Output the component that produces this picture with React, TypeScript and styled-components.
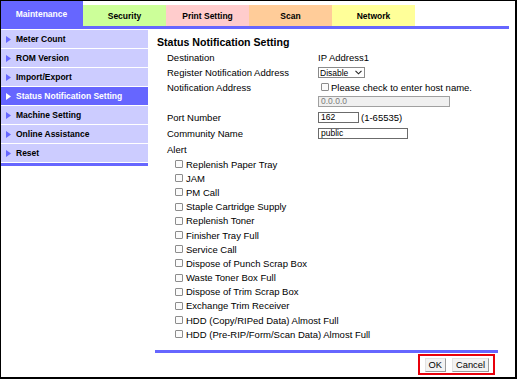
import React from "react";
import styled, { createGlobalStyle } from "styled-components";

const GlobalStyle = createGlobalStyle`
  body {
    margin: 0;
    background: #fff;
    font-family: "Liberation Sans", Arial, sans-serif;
    color: #000;
  }
`;

const BLUE = "#6666ff";
const LAVENDER = "#ccccff";

const Frame = styled.div`
  width: 517px;
  height: 379px;
  box-sizing: border-box;
  border: 1px solid #000;
  border-right-width: 2px;
  border-bottom-width: 2px;
  overflow: hidden;
  background: #fff;
`;

const Page = styled.div`
  margin: -1px 0 0 -1px;
  width: 509px;
`;

const TabBar = styled.div`
  display: flex;
  align-items: flex-start;
  height: 26px;
`;

const Tab = styled.div<{ $bg: string; $active?: boolean }>`
  width: 83px;
  height: ${(p) => (p.$active ? 26 : 21)}px;
  margin-top: ${(p) => (p.$active ? 0 : 5)}px;
  background: ${(p) => p.$bg};
  color: ${(p) => (p.$active ? "#fff" : "#000")};
  font-size: 8.5px;
  font-weight: bold;
  display: flex;
  align-items: center;
  justify-content: center;
  padding-top: ${(p) => (p.$active ? 2 : 0)}px;
  box-sizing: border-box;
`;

const Rule = styled.div`
  height: 3px;
  width: 100%;
  background: ${BLUE};
`;

const Body = styled.div`
  display: flex;
  gap: 7px;
  margin-top: 1px;
`;

const Sidebar = styled.nav`
  width: 148px;
  flex: none;
`;

const MenuItem = styled.div<{ $active?: boolean }>`
  height: 18px;
  margin-bottom: 1px;
  background: ${(p) => (p.$active ? BLUE : LAVENDER)};
  color: ${(p) => (p.$active ? "#fff" : "#000")};
  display: flex;
  align-items: center;
  gap: 5px;
  padding-left: 6px;
  font-size: 8.5px;
  font-weight: bold;
`;

const Content = styled.main`
  width: 343px;
  padding-top: 4px;
`;

const Title = styled.div`
  height: 16px;
  line-height: 16px;
  font-size: 10.6px;
  font-weight: bold;
  padding-left: 2px;
`;

const Form = styled.div`
  padding-left: 12px;
  font-size: 9.5px;
`;

const Row = styled.div<{ $h: number }>`
  display: grid;
  grid-template-columns: 151px 1fr;
  align-items: center;
  height: ${(p) => p.$h}px;
`;

const Value = styled.div`
  display: flex;
  align-items: center;
  gap: 2px;
`;

const SelectBox = styled.div`
  width: 47px;
  height: 11px;
  box-sizing: border-box;
  border: 1px solid #8a8a8a;
  display: flex;
  align-items: center;
  justify-content: space-between;
  padding: 0 2px 0 1px;
  font-size: 8.5px;
`;

const TextBox = styled.div<{ $w: number; $disabled?: boolean }>`
  width: ${(p) => p.$w}px;
  height: 11px;
  box-sizing: border-box;
  border: 1px solid ${(p) => (p.$disabled ? "#a0a0a0" : "#6b6b6b")};
  background: ${(p) => (p.$disabled ? "#f0f0f0" : "#fff")};
  color: ${(p) => (p.$disabled ? "#7a7a7a" : "#000")};
  font-size: 8.5px;
  line-height: 9px;
  padding-left: 2px;
`;

const Check = styled.span`
  width: 8px;
  height: 8px;
  box-sizing: border-box;
  border: 1px solid #8c8c8c;
  border-radius: 1px;
  background: #fbfbfb;
  flex: none;
`;

const AlertList = styled.div`
  padding-left: 8px;
`;

const AlertItem = styled.div`
  height: 14.2px;
  display: flex;
  align-items: center;
  gap: 3px;
`;

const Footer = styled.div`
  margin-top: 9px;
`;

const Actions = styled.div`
  display: flex;
  justify-content: flex-end;
  padding: 1px 3px 0 0;
`;

const Highlight = styled.div`
  display: flex;
  align-items: center;
  gap: 6px;
  height: 21px;
  box-sizing: border-box;
  border: 2px solid #e8000b;
  padding: 0 4px 0 5px;
`;

const Button = styled.button`
  height: 14px;
  padding: 0 3px;
  font-family: inherit;
  font-size: 9.3px;
  color: #000;
  background: #f2f2f2;
  border: 1px solid #9a9a9a;
  border-top-color: #e2e2e2;
  border-left-color: #e2e2e2;
  line-height: 11px;
  margin-top: 1px;
`;

const Arrow = ({ color }: { color: string }) => (
  <svg width="5" height="7" viewBox="0 0 5 7">
    <path d="M0 0 L5 3.5 L0 7 Z" fill={color} />
  </svg>
);

const Chevron = () => (
  <svg width="7" height="5" viewBox="0 0 7 5">
    <path d="M0.5 0.8 L3.5 3.8 L6.5 0.8" fill="none" stroke="#222" strokeWidth="1.1" />
  </svg>
);

const tabs = [
  { label: "Maintenance", bg: BLUE, active: true },
  { label: "Security", bg: "#ccff99" },
  { label: "Print Setting", bg: "#ffcccc" },
  { label: "Scan", bg: "#ffcc99" },
  { label: "Network", bg: "#ffff99" },
];

const menu = [
  "Meter Count",
  "ROM Version",
  "Import/Export",
  "Status Notification Setting",
  "Machine Setting",
  "Online Assistance",
  "Reset",
];

const alerts = [
  "Replenish Paper Tray",
  "JAM",
  "PM Call",
  "Staple Cartridge Supply",
  "Replenish Toner",
  "Finisher Tray Full",
  "Service Call",
  "Dispose of Punch Scrap Box",
  "Waste Toner Box Full",
  "Dispose of Trim Scrap Box",
  "Exchange Trim Receiver",
  "HDD (Copy/RIPed Data) Almost Full",
  "HDD (Pre-RIP/Form/Scan Data) Almost Full",
];

export default function App() {
  return (
    <Frame>
      <GlobalStyle />
      <Page>
        <TabBar>
          {tabs.map((t) => (
            <Tab key={t.label} $bg={t.bg} $active={t.active}>
              {t.label}
            </Tab>
          ))}
        </TabBar>
        <Rule />
        <Body>
          <Sidebar>
            {menu.map((m) => {
              const active = m === "Status Notification Setting";
              return (
                <MenuItem key={m} $active={active}>
                  <Arrow color={active ? "#fff" : BLUE} />
                  {m}
                </MenuItem>
              );
            })}
            <Rule />
          </Sidebar>
          <Content>
            <Title>Status Notification Setting</Title>
            <Form>
              <Row $h={15}>
                <span>Destination</span>
                <span>IP Address1</span>
              </Row>
              <Row $h={15}>
                <span>Register Notification Address</span>
                <Value>
                  <SelectBox>
                    Disable <Chevron />
                  </SelectBox>
                </Value>
              </Row>
              <Row $h={14}>
                <span>Notification Address</span>
                <Value>
                  <Check style={{ marginLeft: 3 }} />
                  Please check to enter host name.
                </Value>
              </Row>
              <Row $h={15}>
                <span />
                <Value>
                  <TextBox $w={132} $disabled>
                    0.0.0.0
                  </TextBox>
                </Value>
              </Row>
              <Row $h={17}>
                <span>Port Number</span>
                <Value>
                  <TextBox $w={41}>162</TextBox>
                  (1-65535)
                </Value>
              </Row>
              <Row $h={15}>
                <span>Community Name</span>
                <Value>
                  <TextBox $w={90}>public</TextBox>
                </Value>
              </Row>
              <Row $h={16}>
                <span>Alert</span>
              </Row>
              <AlertList>
                {alerts.map((a) => (
                  <AlertItem key={a}>
                    <Check />
                    {a}
                  </AlertItem>
                ))}
              </AlertList>
            </Form>
            <Footer>
              <Rule />
              <Actions>
                <Highlight>
                  <Button>OK</Button>
                  <Button>Cancel</Button>
                </Highlight>
              </Actions>
            </Footer>
          </Content>
        </Body>
      </Page>
    </Frame>
  );
}
